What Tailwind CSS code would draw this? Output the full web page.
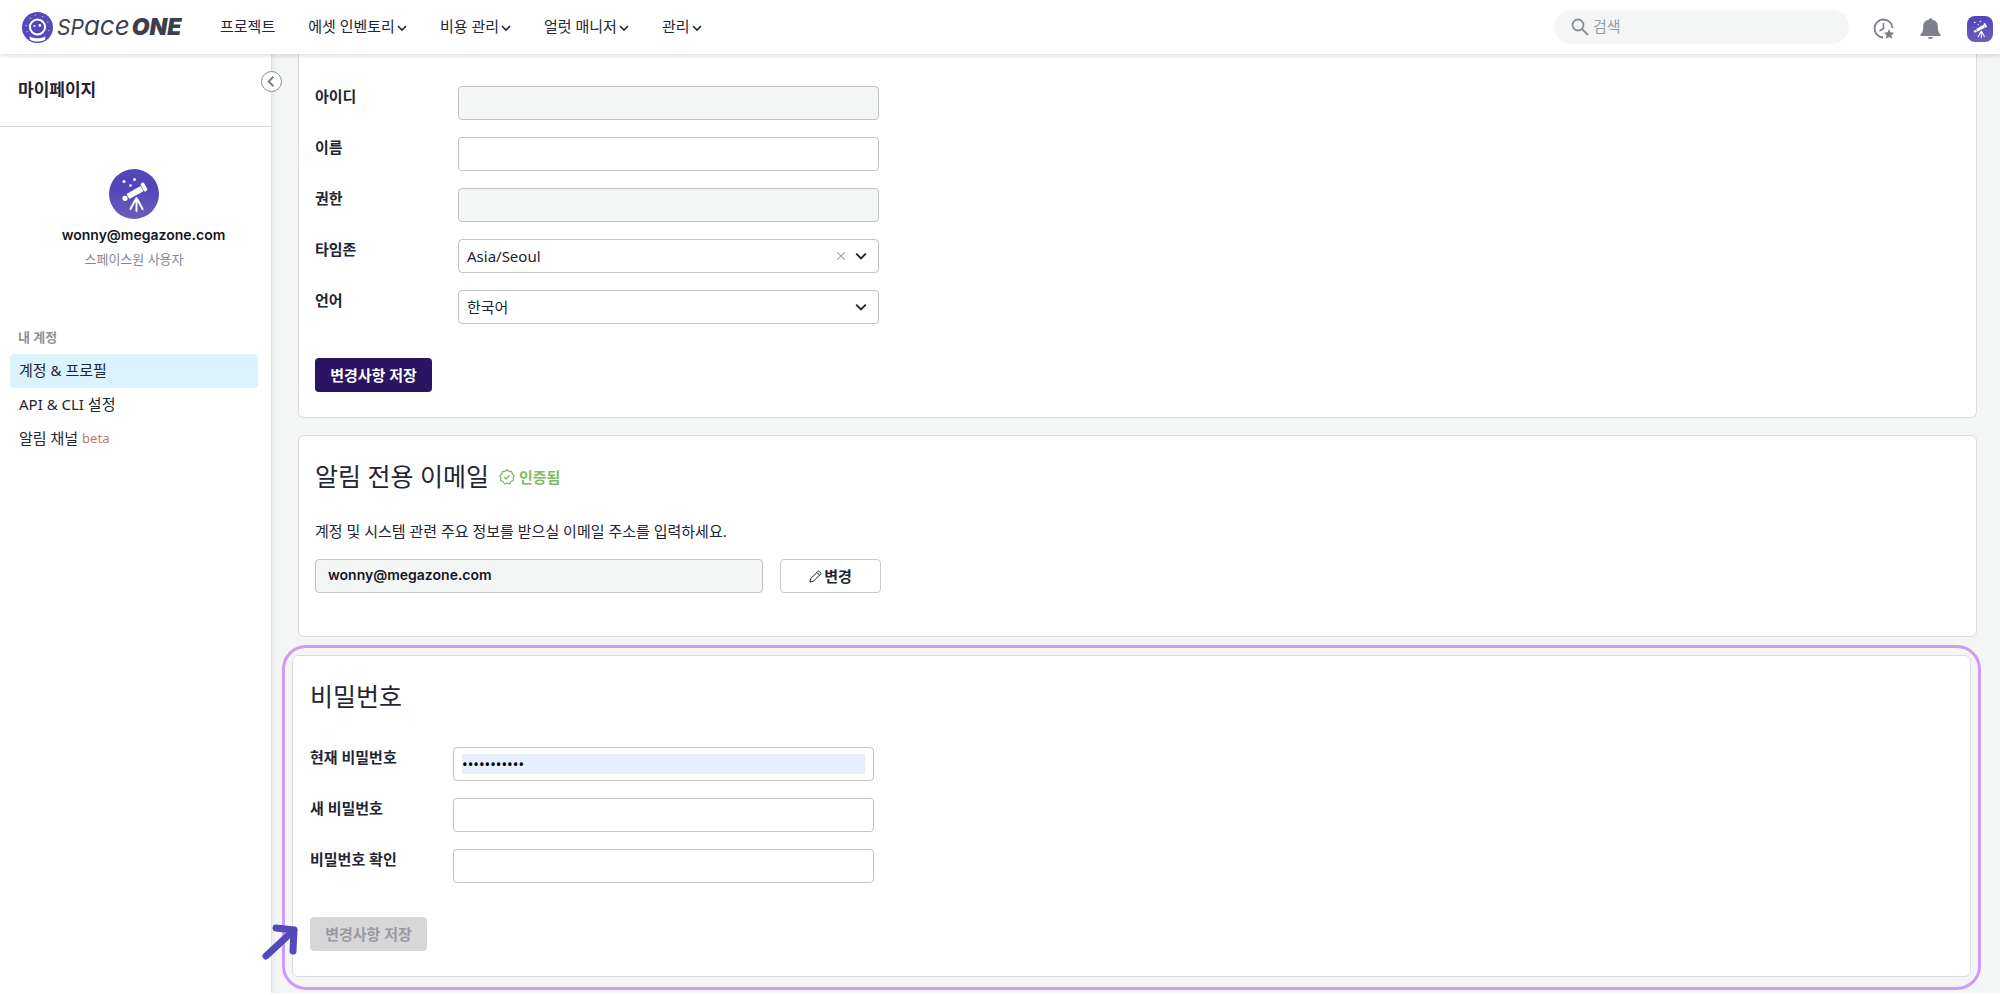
<!DOCTYPE html>
<html lang="ko">
<head>
    <meta charset="UTF-8">
    <meta name="viewport" content="width=device-width, initial-scale=1.0">
    <title>SpaceONE - 마이페이지</title>
    <script src="https://cdn.jsdelivr.net/npm/@tailwindcss/browser@4"></script>
    <style>
        body {
            font-family: 'Noto Sans', 'Noto Sans CJK KR', sans-serif;
        }
    </style>
</head>
<body class="bg-white text-[#232533] text-[15px] leading-5">
    <!-- Shared icons -->
    <svg class="hidden">
        <symbol id="chevron" viewBox="0 0 10 8"><path d="M1 2l4 4 4-4" fill="none" stroke="currentColor" stroke-width="1.600"/></symbol>
        <symbol id="telescope" viewBox="0 0 50 50">
            <g fill="#fff">
                <circle cx="15" cy="12.500" r="1.500"/><circle cx="25.500" cy="10.500" r="1.500"/><circle cx="21.500" cy="16.500" r="1.300"/>
                <path d="M18.300 24.500 30.700 17.500a1 1 0 0 1 1.400.4l1.900 3.400a1 1 0 0 1-.4 1.400L21.200 29.500a1 1 0 0 1-1.400-.4l-1.900-3.200a1 1 0 0 1 .4-1.400z"/>
                <rect x="33" y="13.500" width="4" height="9" rx="1.500" transform="rotate(-28 35 18)"/>
                <circle cx="16" cy="29.300" r="2.600"/>
            </g>
            <path d="M27.500 29v13M26.500 30.500 21.500 40M28.500 30.500 33.500 40" fill="none" stroke="#fff" stroke-width="2" stroke-linecap="round"/>
        </symbol>
    </svg>

    <!-- Header -->
    <header class="relative z-10 flex items-center h-[54px] pl-[22px] pr-[7px] bg-white shadow-[0_2px_4px_rgba(0,0,0,0.12)]">
        <a href="#" class="flex items-center gap-1 w-[198px] shrink-0" aria-label="SpaceONE">
            <svg class="size-[31px] shrink-0" viewBox="0 0 30 30">
                <circle cx="15" cy="15" r="15" fill="#5449b8"/>
                <circle cx="15" cy="14.500" r="7.300" fill="none" stroke="#fff" stroke-width="2"/>
                <path d="M7.500 23.500c4 2.600 11 2.600 15 0v3c-4 2.600-11 2.600-15 0z" fill="#fff"/>
                <circle cx="12" cy="13.600" r="1" fill="#fff"/><circle cx="17.300" cy="13" r="1.300" fill="#fff"/>
                <g fill="#c5bfee"><circle cx="8" cy="6" r=".7"/><circle cx="13" cy="3" r=".7"/><circle cx="20" cy="4.500" r=".7"/><circle cx="25" cy="10" r=".7"/><circle cx="4" cy="13" r=".7"/><circle cx="26" cy="18" r=".7"/><circle cx="5" cy="19" r=".7"/></g>
            </svg>
            <span class="flex items-baseline italic text-[#3d404c] font-['Inter']"><span class="text-[21px]">SP</span><span class="text-[26px]">ace</span><span class="ml-0.5 text-[23px] font-black">ONE</span></span>
        </a>
        <nav class="flex items-center gap-[33px] pb-[2px] whitespace-nowrap">
            <a href="#">프로젝트</a>
            <a href="#" class="flex items-center gap-0.5">에셋 인벤토리<svg class="w-[10px] h-2 mt-1"><use href="#chevron"/></svg></a>
            <a href="#" class="flex items-center gap-0.5">비용 관리<svg class="w-[10px] h-2 mt-1"><use href="#chevron"/></svg></a>
            <a href="#" class="flex items-center gap-0.5">얼럿 매니저<svg class="w-[10px] h-2 mt-1"><use href="#chevron"/></svg></a>
            <a href="#" class="flex items-center gap-0.5">관리<svg class="w-[10px] h-2 mt-1"><use href="#chevron"/></svg></a>
        </nav>
        <label class="flex items-center gap-1 w-[295px] h-[34px] ml-auto pl-[17px] pr-4 rounded-full bg-[#f4f6f6] text-[#898b95]">
            <svg class="size-[18px] shrink-0" viewBox="0 0 18 18" fill="none" stroke="currentColor" stroke-width="1.800"><circle cx="7" cy="7" r="5.500"/><path d="M11 11l6 6"/></svg>
            <input type="search" aria-label="검색" placeholder="검색" class="w-full pb-0.5 bg-transparent outline-none text-[15px] placeholder:text-[#9a9ba5]">
        </label>
        <div class="flex items-center gap-[26px] ml-6 pt-[3px] text-[#7d7f8a]">
            <button type="button" aria-label="최근 항목">
                <svg class="block size-[21px]" viewBox="0 0 21 21">
                    <path d="M10 19.500A9 9 0 1 1 19.500 10" fill="none" stroke="currentColor" stroke-width="1.800"/>
                    <path d="M10.500 5v5.500l-4 2.500" fill="none" stroke="currentColor" stroke-width="1.600"/>
                    <path d="M16 11l1.500 3.200 3.500.5-2.500 2.500.6 3.600-3.100-1.700-3.100 1.700.6-3.600-2.500-2.500 3.500-.5z" fill="currentColor"/>
                </svg>
            </button>
            <button type="button" aria-label="알림">
                <svg class="block size-[21px]" viewBox="0 0 21 21" fill="currentColor">
                    <path d="M10.500 0a1.500 1.500 0 0 1 1.500 1.500c3.800.8 5.800 3.400 5.800 6.700 0 4.300.5 6.500 2.700 8.300v1.500H.5v-1.500c2.200-1.800 2.700-4 2.700-8.300 0-3.300 2-5.900 5.800-6.700A1.500 1.500 0 0 1 10.500 0z"/><path d="M8 19h5a2.500 2 0 0 1-5 0z"/>
                </svg>
            </button>
            <button type="button" aria-label="내 프로필" class="size-[26px] rounded-lg bg-gradient-to-b from-[#5146b9] to-[#6c5bb8]"><svg class="size-[26px]"><use href="#telescope"/></svg></button>
        </div>
    </header>

    <div class="flex">
        <!-- Sidebar -->
        <aside class="relative w-[272px] shrink-0 bg-white border-r border-[#dddde3]">
            <h1 class="flex items-center h-[73px] pl-[18px] border-b border-[#d3d4d8] font-bold text-[17px]">마이페이지</h1>
            <button type="button" aria-label="메뉴 접기" class="absolute z-10 top-[17px] -right-[11px] size-[21px] rounded-full border border-[#898b95] bg-white text-[#7d7f8a]">
                <svg class="size-full" viewBox="0 0 20 20"><path d="M12 5l-5 5 5 5" fill="none" stroke="currentColor" stroke-width="2"/></svg>
            </button>
            <div class="flex flex-col items-center pt-[42px]">
                <div class="size-[50px] mr-[3px] rounded-full bg-gradient-to-b from-[#5146b9] from-40% to-[#6f5cb9]"><svg class="size-[50px]"><use href="#telescope"/></svg></div>
                <p class="pl-4 mt-[6px] font-['Inter'] font-semibold text-sm text-[#141625]">wonny@megazone.com</p>
                <p class="mr-[3px] mt-1 text-[13px] leading-5 text-[#858793]">스페이스원 사용자</p>
            </div>
            <div class="mt-[58px] pl-[10px] pr-[13px]">
                <h2 class="pl-2 mb-[7px] text-[13px] font-bold text-[#8f919b]">내 계정</h2>
                <ul>
                    <li><a href="#" class="flex items-center h-[34px] px-[9px] pb-0.5 rounded bg-[#dcf2fd]">계정 &amp; 프로필</a></li>
                    <li><a href="#" class="flex items-center h-[34px] px-[9px] pb-0.5">API &amp; CLI 설정</a></li>
                    <li><a href="#" class="flex items-center h-[34px] px-[9px] pb-0.5">알림 채널<span class="ml-1 text-[13px] text-[#c97468]">beta</span></a></li>
                </ul>
            </div>
        </aside>

        <main class="flex-1 min-w-0 border-l-3 border-[#ebecef] bg-[#f4f6f6] pb-[3px]">
            <!-- Profile -->
            <form class="ml-[23px] mr-[23px] pt-8 pb-[25px] px-4 bg-white border border-t-0 border-[#dadbdd] rounded-b-md">
                <div class="flex flex-col gap-[17px]">
                    <div class="flex">
                        <label for="userId" class="w-[143px] font-bold">아이디</label>
                        <input id="userId" type="text" disabled class="w-[421px] h-[34px] px-2 rounded border border-[#c1c3ca] bg-[#f4f6f6]">
                    </div>
                    <div class="flex">
                        <label for="userName" class="w-[143px] font-bold">이름</label>
                        <input id="userName" type="text" class="w-[421px] h-[34px] px-2 rounded border border-[#c1c3ca] bg-white">
                    </div>
                    <div class="flex">
                        <label for="role" class="w-[143px] font-bold">권한</label>
                        <input id="role" type="text" disabled class="w-[421px] h-[34px] px-2 rounded border border-[#c1c3ca] bg-[#f4f6f6]">
                    </div>
                    <div class="flex">
                        <label for="timezone" class="w-[143px] font-bold">타임존</label>
                        <div class="relative">
                            <select id="timezone" class="appearance-none w-[421px] h-[34px] px-2 rounded border border-[#c1c3ca] bg-white"><option>Asia/Seoul</option></select>
                            <button type="button" aria-label="지우기" class="absolute right-[34px] top-[13px] text-[#a5a7b0]"><svg class="block size-2" viewBox="0 0 8 8"><path d="M0 0l8 8M8 0L0 8" stroke="currentColor" stroke-width="1.200"/></svg></button>
                            <svg class="absolute right-3 top-3 w-3 h-[10px] pointer-events-none"><use href="#chevron"/></svg>
                        </div>
                    </div>
                    <div class="flex">
                        <label for="language" class="w-[143px] font-bold">언어</label>
                        <div class="relative">
                            <select id="language" class="appearance-none w-[421px] h-[34px] px-2 rounded border border-[#c1c3ca] bg-white"><option>한국어</option></select>
                            <svg class="absolute right-3 top-3 w-3 h-[10px] pointer-events-none"><use href="#chevron"/></svg>
                        </div>
                    </div>
                </div>
                <button type="button" class="block w-[117px] h-[34px] mt-[34px] rounded bg-[#2b1461] text-white font-bold">변경사항 저장</button>
            </form>

            <!-- Notification email -->
            <section class="ml-[23px] mr-[23px] mt-[17px] pt-[25px] pb-[43px] px-4 bg-white border border-[#dadbdd] rounded-md">
                <div class="flex items-center gap-[10px] h-8">
                    <h2 class="pb-0.5 text-[25px]">알림 전용 이메일</h2>
                    <span class="flex items-center gap-1 font-bold text-[15px] text-[#7bbd66]">
                        <svg class="size-4" viewBox="0 0 16 16" fill="none" stroke="currentColor" stroke-width="1.300" stroke-linejoin="round"><path d="M8 .8l2 1.600 2.600.1.700 2.500 1.900 1.900-1 2.100.2 2.600-2.500.9L10.400 15 8 14.200 5.600 15l-1.500-2.500-2.500-.9.2-2.600-1-2.100L2.700 5l.7-2.500L6 2.400z"/><path d="M5.300 8l2 2L10.800 6.300"/></svg>
                        인증됨
                    </span>
                </div>
                <p class="mt-7"><label for="notiEmail">계정 및 시스템 관련 주요 정보를 받으실 이메일 주소를 입력하세요.</label></p>
                <div class="flex gap-[17px] mt-[18px]">
                    <input id="notiEmail" type="email" value="wonny@megazone.com" disabled class="w-[448px] h-[34px] px-3 pb-[3px] rounded border border-[#c1c3ca] bg-[#f4f5f5] font-['Inter'] font-semibold text-sm text-[#141625]">
                    <button type="button" class="flex items-center justify-center gap-0.5 w-[101px] h-[34px] rounded border border-[#c9cbd0] bg-white font-bold">
                        <svg class="size-[13px]" viewBox="0 0 13 13" fill="none" stroke="currentColor" stroke-width="1" stroke-linejoin="round"><path d="M1 12l.8-3.500 7-7a1.200 1.200 0 0 1 1.700 0l1 1a1.200 1.200 0 0 1 0 1.700l-7 7zM7.800 2.500l2.700 2.700"/></svg>변경
                    </button>
                </div>
            </section>

            <!-- Password -->
            <div class="relative ml-[7px] mr-[19px] mt-2 p-[7px] pb-[10px] border-3 border-[#cd9cf5] rounded-[24px]">
                <form class="pt-[25px] pb-[25px] px-[17px] bg-white border border-[#dadbdd] rounded-md">
                    <h2 class="h-8 flex items-center pb-0.5 text-[25px]">비밀번호</h2>
                    <div class="flex flex-col gap-[17px] mt-[34px]">
                        <div class="flex">
                            <label for="currentPassword" class="w-[143px] font-bold">현재 비밀번호</label>
                            <div class="flex items-center w-[421px] h-[34px] px-2 rounded border border-[#c1c3ca] bg-white">
                                <input id="currentPassword" type="password" value="spaceone123" class="w-full h-5 outline-none bg-[#e6effd] text-[15px] text-black">
                            </div>
                        </div>
                        <div class="flex">
                            <label for="newPassword" class="w-[143px] font-bold">새 비밀번호</label>
                            <input id="newPassword" type="password" class="w-[421px] h-[34px] px-2 rounded border border-[#c1c3ca] bg-white">
                        </div>
                        <div class="flex">
                            <label for="confirmPassword" class="w-[143px] font-bold">비밀번호 확인</label>
                            <input id="confirmPassword" type="password" class="w-[421px] h-[34px] px-2 rounded border border-[#c1c3ca] bg-white">
                        </div>
                    </div>
                    <button type="button" disabled class="block w-[117px] h-[34px] mt-[34px] rounded bg-[#d7d7da] text-[#98999f] font-bold">변경사항 저장</button>
                </form>
                <svg class="absolute -left-[24px] bottom-[24px] w-10 h-10" viewBox="0 0 40 40" fill="none" stroke="#5449b8" stroke-width="7" stroke-linecap="round" stroke-linejoin="round"><path d="M5 33L33 7M15 5l18 2-1 21"/></svg>
            </div>
        </main>
    </div>
</body>
</html>
